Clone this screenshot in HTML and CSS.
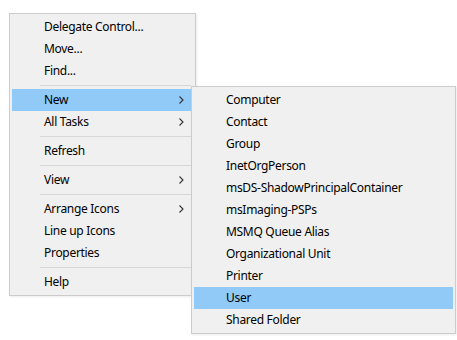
FILE: index.html
```html
<!DOCTYPE html>
<html lang="en">
<head>
  <meta charset="UTF-8" />
  <title>Context Menu</title>
  <link rel="stylesheet" href="styles.css">
</head>
<body>
  <div class="menu main-menu">
    <div class="item">Delegate Control...</div>
    <div class="item">Move...</div>
    <div class="item">Find...</div>
    <div class="sep"></div>
    <div class="item has-sub open">New
      <svg class="chev" width="5" height="8" viewBox="0 0 5 8"><path d="M0.5 0.5 L4 4 L0.5 7.5" fill="none" stroke="#333" stroke-width="1.1"/></svg>
      <div class="menu submenu">
        <div class="item">Computer</div>
        <div class="item">Contact</div>
        <div class="item">Group</div>
        <div class="item">InetOrgPerson</div>
        <div class="item">msDS-ShadowPrincipalContainer</div>
        <div class="item">msImaging-PSPs</div>
        <div class="item">MSMQ Queue Alias</div>
        <div class="item">Organizational Unit</div>
        <div class="item">Printer</div>
        <div class="item active">User</div>
        <div class="item">Shared Folder</div>
      </div>
    </div>
    <div class="item has-sub">All Tasks
      <svg class="chev" width="5" height="8" viewBox="0 0 5 8"><path d="M0.5 0.5 L4 4 L0.5 7.5" fill="none" stroke="#333" stroke-width="1.1"/></svg>
    </div>
    <div class="sep"></div>
    <div class="item">Refresh</div>
    <div class="sep"></div>
    <div class="item has-sub">View
      <svg class="chev" width="5" height="8" viewBox="0 0 5 8"><path d="M0.5 0.5 L4 4 L0.5 7.5" fill="none" stroke="#333" stroke-width="1.1"/></svg>
    </div>
    <div class="sep"></div>
    <div class="item has-sub">Arrange Icons
      <svg class="chev" width="5" height="8" viewBox="0 0 5 8"><path d="M0.5 0.5 L4 4 L0.5 7.5" fill="none" stroke="#333" stroke-width="1.1"/></svg>
    </div>
    <div class="item">Line up Icons</div>
    <div class="item">Properties</div>
    <div class="sep"></div>
    <div class="item">Help</div>
  </div>
</body>
</html>
```

FILE: styles.css
```css
html, body {
  min-height: 340px;
}
body {
  margin: 0;
  background: #fff;
  font-family: 'Noto Sans', sans-serif;
  font-size: 12px;
  letter-spacing: -0.3px;
  color: #000;
}
.menu {
  background: #f0f0f0;
  border: 1px solid #cccccc;
  padding: 2px;
  box-shadow: 1px 1px 2px rgba(0,0,0,0.08);
}
.main-menu {
  width: 179px;
  padding-right: 4px;
  margin: 13px 0 0 9px;
}
.item {
  position: relative;
  height: 22px;
  line-height: 22px;
  padding-left: 32px;
  white-space: nowrap;
}
.open {
  background: #91c9f7;
}
.active {
  background: #91c9f7;
}
.chev {
  position: absolute;
  right: 7px;
  top: 7px;
}
.sep {
  height: 1px;
  margin: 3px 0 3px 28px;
  background: #d7d7d7;
}
.submenu {
  position: absolute;
  left: 100%;
  top: -3px;
  width: 259px;
  z-index: 2;
}
```
